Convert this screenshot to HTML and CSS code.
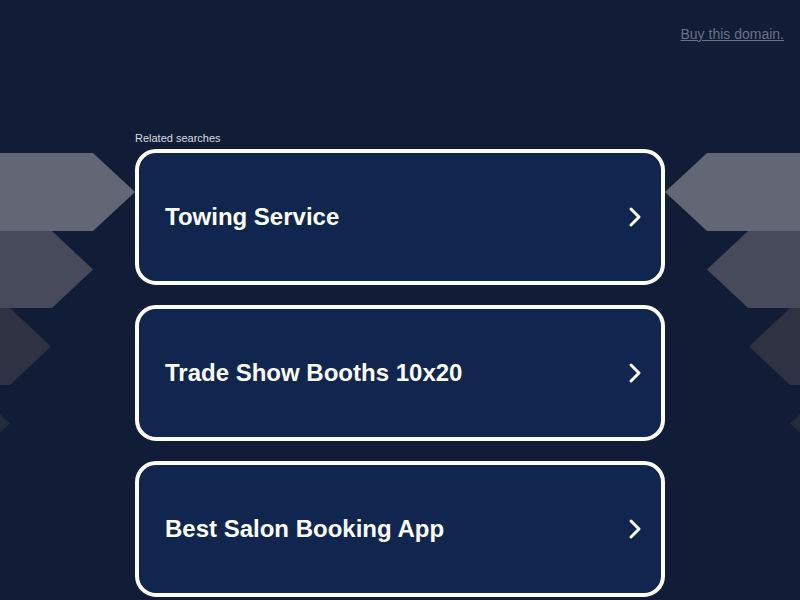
FILE: index.html
```html
<!DOCTYPE html>
<html lang="en">
<head>
<meta charset="utf-8">
<title>Related searches</title>
<link rel="stylesheet" href="styles.css">
</head>
<body>
<svg class="deco" width="800" height="600" viewBox="0 0 800 600" aria-hidden="true">
  <polygon points="0,153 93,153 135,192 93,231 0,231" fill="#636775"/>
  <polygon points="0,231 52,231 93,269.5 52,308 0,308" fill="#464a5a"/>
  <polygon points="0,308 10,308 51,346.5 10,385 0,385" fill="#2e3243"/>
  <polygon points="-32,385 10,423.5 -32,462" fill="#252a3d"/>
  <polygon points="800,153 707,153 665,192 707,231 800,231" fill="#636775"/>
  <polygon points="800,231 748,231 707,269.5 748,308 800,308" fill="#464a5a"/>
  <polygon points="800,308 790,308 749,346.5 790,385 800,385" fill="#2e3243"/>
  <polygon points="832,385 790,423.5 832,462" fill="#252a3d"/>
</svg>
<header class="top">
  <a class="buy" href="#">Buy this domain.</a>
</header>
<main class="wrap">
  <div class="label">Related searches</div>
  <a class="card" href="#"><span class="title">Towing Service</span><svg class="chev" width="14" height="22" viewBox="0 0 14 22"><polyline points="3,3 11,11 3,19" fill="none" stroke="#fff" stroke-width="3" stroke-linecap="round" stroke-linejoin="round"/></svg></a>
  <a class="card" href="#"><span class="title">Trade Show Booths 10x20</span><svg class="chev" width="14" height="22" viewBox="0 0 14 22"><polyline points="3,3 11,11 3,19" fill="none" stroke="#fff" stroke-width="3" stroke-linecap="round" stroke-linejoin="round"/></svg></a>
  <a class="card" href="#"><span class="title">Best Salon Booking App</span><svg class="chev" width="14" height="22" viewBox="0 0 14 22"><polyline points="3,3 11,11 3,19" fill="none" stroke="#fff" stroke-width="3" stroke-linecap="round" stroke-linejoin="round"/></svg></a>
</main>
</body>
</html>
```
FILE: styles.css
```css
html, body {
  margin: 0;
  padding: 0;
}
body {
  background: #111c36;
  font-family: "Liberation Sans", Arial, sans-serif;
  width: 800px;
  height: 600px;
  overflow: hidden;
  position: relative;
}
.deco {
  position: absolute;
  left: 0;
  top: 0;
  z-index: 0;
}
.top {
  position: relative;
  z-index: 1;
  display: flex;
  justify-content: flex-end;
  padding: 26px 16px 0 0;
  height: 106px;
}
.buy {
  color: #6b7185;
  font-size: 14px;
  text-decoration: underline;
}
.wrap {
  position: relative;
  z-index: 1;
  width: 530px;
  margin: 0 auto;
  display: flex;
  flex-direction: column;
  gap: 20px;
}
.label {
  color: #d8dbe2;
  font-size: 11px;
  margin-bottom: -16px;
  line-height: 13px;
}
.card {
  box-sizing: border-box;
  height: 136px;
  border: 4px solid #ffffff;
  border-radius: 21px;
  background: #10264f;
  display: flex;
  align-items: center;
  justify-content: space-between;
  padding: 0 19px 0 26px;
  text-decoration: none;
}
.title {
  color: #ffffff;
  font-size: 24px;
  font-weight: bold;
}
.chev {
  display: block;
}
```
